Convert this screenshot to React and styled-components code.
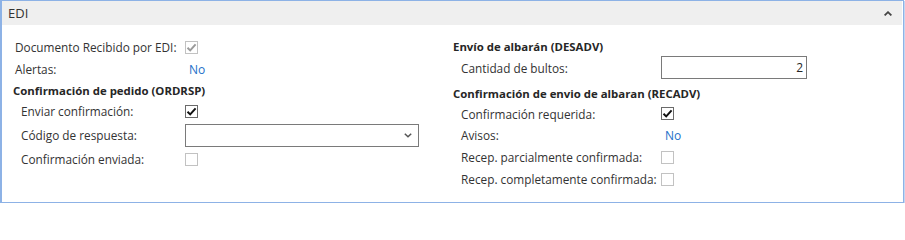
import React from "react";
import styled, { createGlobalStyle } from "styled-components";

const GlobalStyle = createGlobalStyle`
  html, body {
    margin: 0;
    padding: 0;
    background: #ffffff;
  }
  body {
    font-family: "Open Sans", "Noto Sans", "Liberation Sans", sans-serif;
    font-size: 12px;
    color: #333333;
  }
`;

const leftRows = [
  { type: "check", label: "Documento Recibido por EDI:", checked: true, disabled: true },
  { type: "text", label: "Alertas:", value: "No" },
  { type: "group", label: "Confirmación de pedido (ORDRSP)" },
  { type: "check", label: "Enviar confirmación:", checked: true, indent: true },
  { type: "select", label: "Código de respuesta:", indent: true },
  { type: "check", label: "Confirmación enviada:", disabled: true, indent: true },
];

const rightRows = [
  { type: "group", label: "Envío de albarán (DESADV)", height: 20 },
  { type: "input", label: "Cantidad de bultos:", value: "2", indent: true, height: 23 },
  { type: "group", label: "Confirmación de envio de albaran (RECADV)", height: 20, top: 4 },
  { type: "check", label: "Confirmación requerida:", checked: true, indent: true, height: 21 },
  { type: "text", label: "Avisos:", value: "No", indent: true },
  { type: "check", label: "Recep. parcialmente confirmada:", disabled: true, indent: true },
  { type: "check", label: "Recep. completamente confirmada:", disabled: true, indent: true },
];

function CheckMark({ color }) {
  return (
    <svg width="11" height="11" viewBox="0 0 11 11">
      <path d="M1.5 5.8 L4.2 8.4 L9.6 2.4" fill="none" stroke={color} strokeWidth="2" />
    </svg>
  );
}

function Field({ row, labelWidth, indent }) {
  if (row.type === "group") {
    return (
      <GroupTitle height={row.height} top={row.top}>
        {row.label}
      </GroupTitle>
    );
  }
  const shift = row.indent ? indent : 0;
  return (
    <Row height={row.height} tall={row.type === "select"}>
      <Label width={labelWidth - shift} shift={shift}>
        {row.label}
      </Label>
      {row.type === "check" && (
        <Box disabled={row.disabled}>
          {row.checked && <CheckMark color={row.disabled ? "#9b9b9b" : "#111"} />}
        </Box>
      )}
      {row.type === "text" && <Value>{row.value}</Value>}
      {row.type === "select" && (
        <Select>
          <svg width="8" height="5" viewBox="0 0 8 5">
            <path d="M0.8 0.8 L4 3.8 L7.2 0.8" fill="none" stroke="#555" strokeWidth="1.5" />
          </svg>
        </Select>
      )}
      {row.type === "input" && <NumberInput>{row.value}</NumberInput>}
    </Row>
  );
}

export default function App() {
  return (
    <>
      <GlobalStyle />
      <Panel>
        <Header>
          <Title>EDI</Title>
          <svg width="8" height="5" viewBox="0 0 8 5">
            <path d="M0.6 4.4 L4 1.2 L7.4 4.4" fill="none" stroke="#444" strokeWidth="1.8" />
          </svg>
        </Header>
        <Body>
          <Column pad={11}>
            {leftRows.map((row) => (
              <Field key={row.label} row={row} labelWidth={170} indent={6} />
            ))}
          </Column>
          <Column pad={12}>
            {rightRows.map((row) => (
              <Field key={row.label} row={row} labelWidth={206} indent={6} />
            ))}
          </Column>
        </Body>
      </Panel>
    </>
  );
}

const Panel = styled.div`
  box-sizing: border-box;
  width: 904px;
  height: 203px;
  border: 1px solid #8db2e6;
  border-left-width: 2px;
  box-shadow: 1px 1px 0 #c3d7f3;
  background: #ffffff;
`;

const Header = styled.div`
  display: flex;
  align-items: center;
  justify-content: space-between;
  height: 24px;
  padding: 0 10px 0 6px;
  margin-right: 1px;
  background: #efefef;
`;

const Title = styled.span`
  font-size: 13px;
  color: #333333;
`;

const Body = styled.div`
  display: grid;
  grid-template-columns: 439px 1fr;
  padding-top: 11px;
`;

const Column = styled.div`
  display: flex;
  flex-direction: column;
  padding-left: ${(p) => p.pad}px;
`;

const GroupTitle = styled.div`
  display: flex;
  align-items: center;
  height: ${(p) => p.height || 20}px;
  margin-top: ${(p) => p.top || 0}px;
  font-size: 11.4px;
  font-weight: 700;
  color: #262626;
`;

const Row = styled.div`
  display: flex;
  align-items: center;
  height: ${(p) => (p.tall ? 26 : p.height || 22)}px;
`;

const Label = styled.span`
  flex: none;
  box-sizing: border-box;
  width: ${(p) => p.width}px;
  margin-left: ${(p) => p.shift + 2}px;
  font-size: 11.8px;
  white-space: nowrap;
`;

const Box = styled.span`
  box-sizing: border-box;
  display: flex;
  align-items: center;
  justify-content: center;
  width: 13px;
  height: 13px;
  border: 1px solid ${(p) => (p.disabled ? "#c2c2c2" : "#6a6a6a")};
  background: #ffffff;
`;

const Value = styled.span`
  padding-left: 4px;
  color: #2470c9;
`;

const Select = styled.div`
  box-sizing: border-box;
  display: flex;
  align-items: center;
  justify-content: flex-end;
  width: 234px;
  height: 23px;
  padding-right: 6px;
  border: 1px solid #7a7a7a;
  background: #ffffff;
`;

const NumberInput = styled.div`
  box-sizing: border-box;
  display: flex;
  align-items: center;
  justify-content: flex-end;
  width: 146px;
  height: 23px;
  padding-right: 3px;
  border: 1px solid #7a7a7a;
  color: #262626;
`;
